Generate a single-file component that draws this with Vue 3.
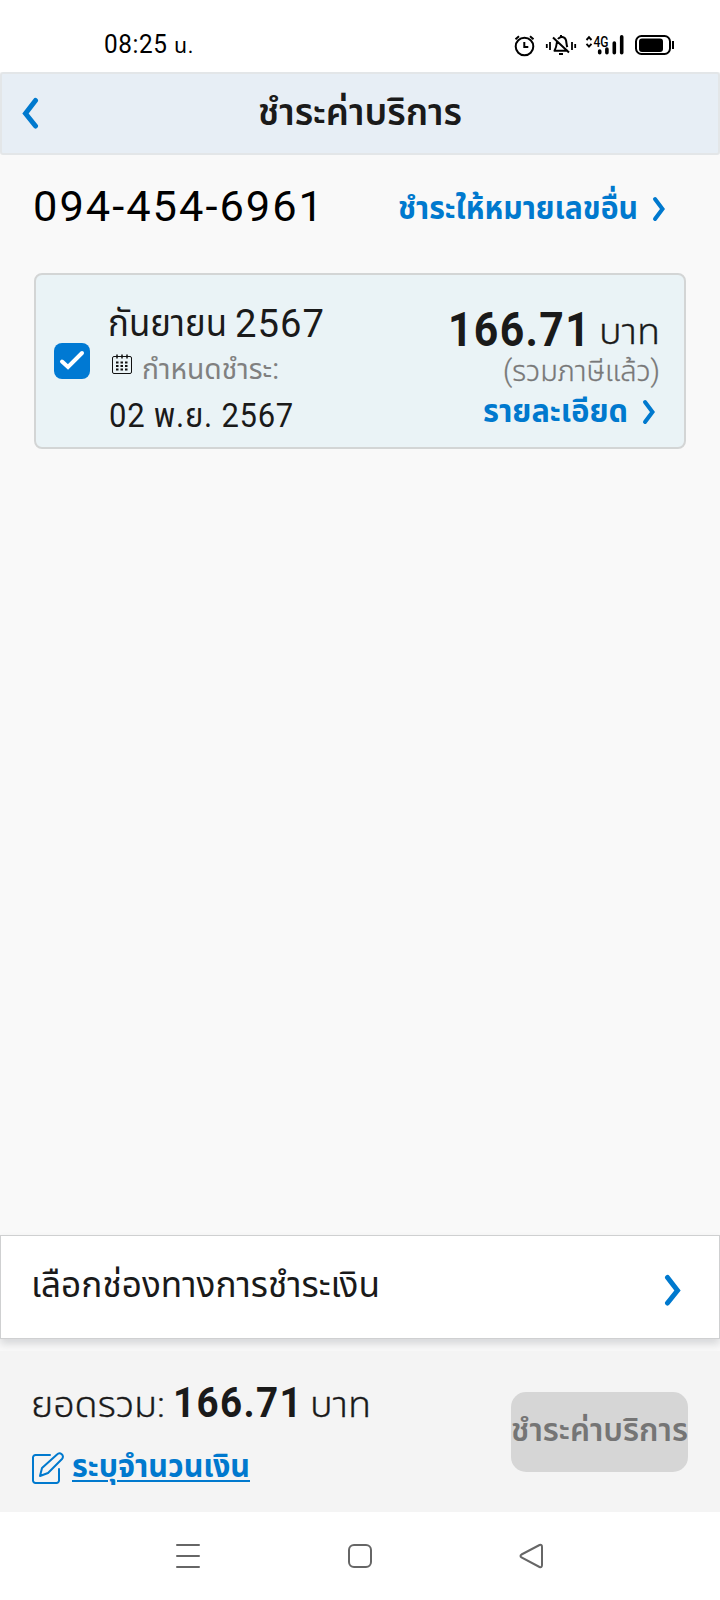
<script setup>
// Fits a label to its designed width, whatever Thai face the device falls back to.
const vFit = {
  mounted(el, { value }) {
    const natural = el.getBoundingClientRect().width
    if (!natural) return
    el.style.transform = `scaleX(${value / natural})`
    el.style.marginRight = `${value - natural}px`
  },
}
</script>

<template>
  <div class="screen">
    <div class="status">
      <span v-fit="90" class="clock">08:25 <small>น.</small></span>
      <svg class="status-icons" width="166" height="24" viewBox="0 0 166 24" fill="none" stroke="#000" stroke-width="2">
        <circle cx="12.500" cy="12.500" r="8.800" />
        <path d="M12.300 8v5h4M3.500 5.300l3.500-3M18 2.300l3.500 3" />
        <path stroke-width="1.800" d="M34.800 10v4M38 8v8M60 8v8M63.200 10v4" />
        <path stroke-width="2" stroke-linejoin="round" d="M45 7.500c-.5 4-.6 6-2.500 9.300h13.500M46 5c2-3.200 7-2.600 8 1.200.5 2 .4 4.500 1.300 7M41 3.500l16 15" />
        <path stroke-width="2" d="M49 1v2M47 20h4" />
        <path stroke-width="1.900" d="M74.500 6l2.500-2.800 2.500 2.800M74.500 9.800l2.500 2.800 2.500-2.800" />
        <text x="81.500" y="12.700" textLength="15" lengthAdjust="spacingAndGlyphs">4G</text>
        <path stroke-width="3.600" stroke-linecap="round" d="M87.700 17v1.700M94.900 15v3.700M102.300 9v9.700M109.700 2.800v15.900" />
        <rect x="124" y="2" width="34" height="18" rx="5.500" />
        <rect x="127" y="4.500" width="24" height="13.500" rx="3" fill="#000" stroke="none" />
        <path d="M161 7v8" />
      </svg>
    </div>

    <header class="header">
      <svg width="17" height="33" viewBox="0 0 17 33"><path d="M13.500 3.500L3.500 16.500l10 12.500" /></svg>
      <h1 v-fit="204">ชำระค่าบริการ</h1>
    </header>

    <main class="main">
      <div class="account">
        <span v-fit="292" class="phone">094-454-6961</span>
        <a class="link other">
          <span v-fit="240">ชำระให้หมายเลขอื่น</span>
          <svg width="14" height="26" viewBox="0 0 14 26"><path d="M3 3l7.500 10L3 23" /></svg>
        </a>
      </div>

      <section class="card">
        <span class="check">
          <svg width="36" height="36" viewBox="0 0 36 36"><path d="M8 18.500l6 5.500L28 10" /></svg>
        </span>
        <div class="period">
          <div class="line month"><span v-fit="119">กันยายน</span><span v-fit="90" class="year">2567</span></div>
          <div class="line due">
            <svg width="22" height="22" viewBox="0 0 22 22" fill="none" stroke="#111">
              <rect x="1.500" y="2.500" width="19" height="17" rx="1.500" />
              <path stroke-width="1.500" d="M6 .500v4M11 .500v4M16 .500v4" />
              <path stroke-width="2.200" stroke-dasharray="2.500 2" d="M5 8.500h12.500M5 12h12.500M5 15.500h12.500" />
            </svg>
            <span v-fit="137">กำหนดชำระ:</span>
          </div>
          <div class="line date"><span v-fit="185">02 พ.ย. 2567</span></div>
        </div>
        <div class="charge">
          <div class="line amount"><b v-fit="143">166.71</b><span v-fit="61">บาท</span></div>
          <div class="line tax"><span v-fit="157">(รวมภาษีแล้ว)</span></div>
          <a class="line link detail">
            <span v-fit="145">รายละเอียด</span>
            <svg width="14" height="26" viewBox="0 0 14 26"><path d="M3 3l7.500 10L3 23" /></svg>
          </a>
        </div>
      </section>
    </main>

    <section class="channel">
      <span v-fit="349">เลือกช่องทางการชำระเงิน</span>
      <svg width="17" height="33" viewBox="0 0 17 33"><path d="M3.500 3.500l10 13-10 12.500" /></svg>
    </section>

    <footer class="footer">
      <div class="summary">
        <div class="total">
          <span v-fit="134" class="light">ยอดรวม:</span>
          <b v-fit="130">166.71</b>
          <span v-fit="61" class="light">บาท</span>
        </div>
        <div class="edit">
          <svg width="33" height="33" viewBox="0 0 33 33">
            <path d="M18 3H3.500A2.500 2.500 0 0 0 1 5.500v23A2.500 2.500 0 0 0 3.500 31h21a2.500 2.500 0 0 0 2.500-2.500V17M8 24l2-8L25 2.500c3-3 8 1 5 4.500L16 21z" />
          </svg>
          <a v-fit="178">ระบุจำนวนเงิน</a>
        </div>
      </div>
      <button class="pay"><span v-fit="177">ชำระค่าบริการ</span></button>
    </footer>

    <nav class="nav">
      <svg width="26" height="26" viewBox="0 0 26 26"><path d="M2 2h22M2 13h22M2 24h22" /></svg>
      <svg width="26" height="26" viewBox="0 0 26 26"><rect x="2" y="2" width="22" height="22" rx="5" /></svg>
      <svg width="26" height="26" viewBox="0 0 26 26"><path d="M2.500 11.500L20.500 2q2.500-.8 2.500 2v18q0 2.800-2.500 2L2.500 14.500q-2-1.500 0-3z" /></svg>
    </nav>
  </div>
</template>

<style>
body { background: #fff; }
</style>

<style scoped>
.screen {
  width: 720px;
  height: 1600px;
  display: flex;
  flex-direction: column;
  overflow: hidden;
  background: #f9f9f9;
  color: #1a1a1a;
  font-family: Roboto, "Noto Sans Thai", "Noto Sans", sans-serif;
}
span, b, a, h1 { white-space: nowrap; transform-origin: 0 50%; }
span, b { display: inline-block; flex: none; }
svg { flex: none; display: block; }

.status {
  height: 72px;
  box-sizing: border-box;
  padding: 0 42px 0 104px;
  display: flex;
  justify-content: space-between;
  background: #fff;
  color: #000;
}
.clock { font-size: 25px; line-height: 30px; margin-top: 30px; letter-spacing: .6px; }
.clock small { font-size: 22px; }
.status-icons { margin-top: 34px; }
.status-icons text { font: 500 14.500px Roboto, sans-serif; fill: #000; stroke: none; }

.header {
  height: 83px;
  box-sizing: border-box;
  border: 2px solid #e3e6e8;
  border-radius: 3px;
  background: #e7eef5;
  display: flex;
  padding-left: 20px;
}
.header svg { margin-top: 23px; fill: none; stroke: #0079ce; stroke-width: 5; stroke-linecap: round; }
.header h1 { margin: 16px 0 0 219px; font-size: 37px; line-height: 46px; font-weight: 650; height: 46px; flex: none; }

.main { flex: 1; }
.account { height: 118px; display: flex; }
.phone { margin: 23px 0 0 33px; font-size: 43px; line-height: 56px; height: 56px; color: #000; letter-spacing: 2px; }
.link { display: flex; color: #0079ce; font-weight: 700; font-size: 32px; line-height: 40px; }
.link svg { fill: none; stroke: #0079ce; stroke-width: 4; stroke-linecap: round; }
.other { margin: 33px 0 0 73px; height: 40px; }
.other svg { margin: 8px 0 0 14px; }

.card {
  margin: 0 34px;
  height: 176px;
  box-sizing: border-box;
  border: 2px solid #d3d5d5;
  border-radius: 8px;
  background: #eaf3f6;
  display: flex;
}
.check { width: 36px; height: 36px; margin: 68px 0 0 18px; border-radius: 8px; background: #0079d3; }
.check svg { fill: none; stroke: #fff; stroke-width: 4; stroke-linecap: round; }
.period { width: 240px; margin-left: 18px; padding-top: 24px; }
.charge { flex: 1; padding: 28px 24px 0 0; }
.line { display: flex; }
.month { gap: 8px; font-size: 37px; line-height: 50px; height: 50px; }
.year { font-size: 38px; letter-spacing: 1px; }
.due { height: 40px; font-size: 29px; line-height: 40px; color: #808080; }
.due svg { margin: 5px 9px 0 3px; }
.date { height: 48px; margin: 2px 0 0 1px; font-size: 34px; line-height: 48px; letter-spacing: .8px; }
.charge .line { justify-content: flex-end; }
.amount { gap: 8px; height: 52px; }
.amount b { font-size: 48px; line-height: 53px; letter-spacing: 1.500px; }
.amount span { font-size: 35px; line-height: 60px; font-weight: 300; -webkit-text-stroke: .3px #1a1a1a; }
.tax { height: 38px; font-size: 29px; line-height: 32px; color: #787878; font-weight: 300; -webkit-text-stroke: .3px #787878; }
.detail { height: 40px; font-size: 32px; line-height: 37px; }
.detail svg { margin: 6px 4px 0 14px; }

.channel {
  height: 104px;
  box-sizing: border-box;
  border: 1px solid #cfd0d1;
  background: #fff;
  box-shadow: 0 5px 8px rgba(60, 65, 75, .18);
  display: flex;
  justify-content: space-between;
  padding: 0 38px 0 30px;
  margin-bottom: 12px;
  font-size: 36px;
}
.channel span { margin-top: 24px; line-height: 50px; height: 50px; }
.channel svg { margin-top: 38px; fill: none; stroke: #0079ce; stroke-width: 5; stroke-linecap: round; }

.footer { height: 161px; background: #f4f4f4; display: flex; justify-content: space-between; padding: 0 32px; position: relative; }
.total { display: flex; height: 54px; margin-top: 27px; line-height: 54px; margin-left: -1px; }
.light { font-size: 35px; font-weight: 300; line-height: 55px; -webkit-text-stroke: .3px #1a1a1a; }
.total b { font-size: 43px; line-height: 49px; margin-left: 8px; letter-spacing: 1.500px; }
.total b + span { margin-left: 7px; }
.edit { display: flex; margin-top: 20px; }
.edit svg { fill: none; stroke: #0079ce; stroke-width: 2; stroke-linejoin: round; stroke-linecap: round; }
.edit a { margin-left: 7px; height: 40px; margin-top: -6px; line-height: 40px; font-size: 32px; font-weight: 700; color: #0079ce; text-decoration: underline; text-decoration-thickness: 2px; text-underline-offset: 3px; }
.pay { width: 177px; height: 80px; margin-top: 41px; padding: 0 0 4px; border: 0; border-radius: 15px; background: #d6d6d6; color: #757575; font: 650 32px/40px Roboto, "Noto Sans Thai", sans-serif; display: flex; align-items: center; }

.nav { height: 88px; background: #fff; display: flex; justify-content: center; align-items: center; gap: 146px; }
.nav svg { fill: none; stroke: #666; stroke-width: 2; stroke-linecap: round; }
</style>
